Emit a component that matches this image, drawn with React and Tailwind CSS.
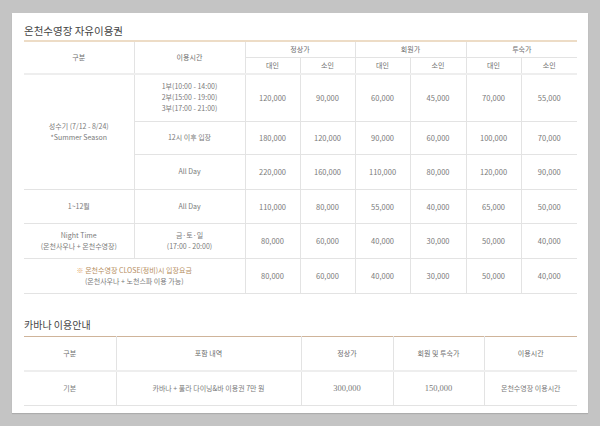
import React from "react";

const F = { fontFamily: '"Noto Sans CJK KR", "Noto Sans", sans-serif' };

function Td({ children, className = "", ...rest }) {
  return (
    <td
      {...rest}
      className={"border-b border-r border-[#e3e3e3] text-center align-middle p-0 " + className}
    >
      {children}
    </td>
  );
}

export default function App() {
  const rows1 = [
    ["120,000", "90,000", "60,000", "45,000", "70,000", "55,000"],
    ["180,000", "120,000", "90,000", "60,000", "100,000", "70,000"],
    ["220,000", "160,000", "110,000", "80,000", "120,000", "90,000"],
    ["110,000", "80,000", "55,000", "40,000", "65,000", "50,000"],
    ["80,000", "60,000", "40,000", "30,000", "50,000", "40,000"],
    ["80,000", "60,000", "40,000", "30,000", "50,000", "40,000"],
  ];
  const prices = (r) =>
    r.map((v, i) => (
      <Td key={i} className={"text-[7.5px] " + (i === 5 ? "border-r-0" : "")}>
        {v}
      </Td>
    ));
  return (
    <div className="w-[600px] h-[426px] bg-[#c4c4c4] pt-[13px] px-[12px]" style={F}>
      <div className="w-[576px] h-[400px] bg-white px-[12px] shadow-[0_1px_1px_rgba(0,0,0,0.12)]">
        <div className="h-[27px] flex items-end pb-[4px] text-[10.5px] text-[#444] leading-none">
          온천수영장 자유이용권
        </div>
        <table className="w-[553px] table-fixed border-collapse border-t-2 border-[#eddcc6] text-[7px] text-[#7a7a7a] leading-[11px]">
          <colgroup>
            <col className="w-[110px]" />
            <col className="w-[111px]" />
            <col className="w-[55px]" />
            <col className="w-[55px]" />
            <col className="w-[55px]" />
            <col className="w-[56px]" />
            <col className="w-[55px]" />
            <col className="w-[56px]" />
          </colgroup>
          <thead className="text-[#6e6e6e]">
            <tr className="h-[16px]">
              <Td rowSpan={2} className="border-b-2 border-b-[#eeeeee]">구분</Td>
              <Td rowSpan={2} className="border-b-2 border-b-[#eeeeee]">이용시간</Td>
              <Td colSpan={2}>정상가</Td>
              <Td colSpan={2}>회원가</Td>
              <Td colSpan={2} className="border-r-0">투숙가</Td>
            </tr>
            <tr className="h-[17px]">
              <Td className="border-b-2 border-b-[#eeeeee]">대인</Td>
              <Td className="border-b-2 border-b-[#eeeeee]">소인</Td>
              <Td className="border-b-2 border-b-[#eeeeee]">대인</Td>
              <Td className="border-b-2 border-b-[#eeeeee]">소인</Td>
              <Td className="border-b-2 border-b-[#eeeeee]">대인</Td>
              <Td className="border-b-2 border-b-[#eeeeee] border-r-0">소인</Td>
            </tr>
          </thead>
          <tbody>
            <tr className="h-[47px]">
              <Td rowSpan={3}>
                성수기 (7/12 - 8/24)
                <br />
                *Summer Season
              </Td>
              <Td>
                1부(10:00 - 14:00)
                <br />
                2부(15:00 - 19:00)
                <br />
                3부(17:00 - 21:00)
              </Td>
              {prices(rows1[0])}
            </tr>
            <tr className="h-[33px]">
              <Td>12시 이후 입장</Td>
              {prices(rows1[1])}
            </tr>
            <tr className="h-[35px]">
              <Td>All Day</Td>
              {prices(rows1[2])}
            </tr>
            <tr className="h-[34px]">
              <Td>1~12월</Td>
              <Td>All Day</Td>
              {prices(rows1[3])}
            </tr>
            <tr className="h-[35px]">
              <Td>
                Night Time
                <br />
                (온천사우나 + 온천수영장)
              </Td>
              <Td>
                금·토·일
                <br />
                (17:00 - 20:00)
              </Td>
              {prices(rows1[4])}
            </tr>
            <tr className="h-[35px]">
              <Td colSpan={2}>
                <span className="text-[#b58d5e]">
                  <span className="text-[#e0a060]">※</span> 온천수영장 CLOSE(정비)시 입장요금
                </span>
                <br />
                (온천사우나 + 노천스파 이용 가능)
              </Td>
              {prices(rows1[5])}
            </tr>
          </tbody>
        </table>
        <div className="h-[42px] flex items-end pb-[6px] text-[10px] text-[#444] leading-none">
          카바나 이용안내
        </div>
        <table className="w-[553px] table-fixed border-collapse border-t border-[#cfb49a] text-[7px] text-[#7a7a7a] leading-[11px]">
          <colgroup>
            <col className="w-[92px]" />
            <col className="w-[185px]" />
            <col className="w-[92px]" />
            <col className="w-[91px]" />
            <col className="w-[93px]" />
          </colgroup>
          <thead className="text-[#6e6e6e]">
            <tr className="h-[35px]">
              <Td className="border-b-2 border-b-[#eeeeee]">구분</Td>
              <Td className="border-b-2 border-b-[#eeeeee]">포함 내역</Td>
              <Td className="border-b-2 border-b-[#eeeeee]">정상가</Td>
              <Td className="border-b-2 border-b-[#eeeeee]">회원 및 투숙가</Td>
              <Td className="border-b-2 border-b-[#eeeeee] border-r-0">이용시간</Td>
            </tr>
          </thead>
          <tbody>
            <tr className="h-[34px]">
              <Td>기본</Td>
              <Td>카바나 + 풀라 다이닝&amp;바 이용권 7만 원</Td>
              <Td>
                <span className="text-[8.5px]" style={{ fontFamily: '"Liberation Serif", serif' }}>300,000</span>
              </Td>
              <Td>
                <span className="text-[8.5px]" style={{ fontFamily: '"Liberation Serif", serif' }}>150,000</span>
              </Td>
              <Td className="border-r-0">온천수영장 이용시간</Td>
            </tr>
          </tbody>
        </table>
      </div>
    </div>
  );
}
